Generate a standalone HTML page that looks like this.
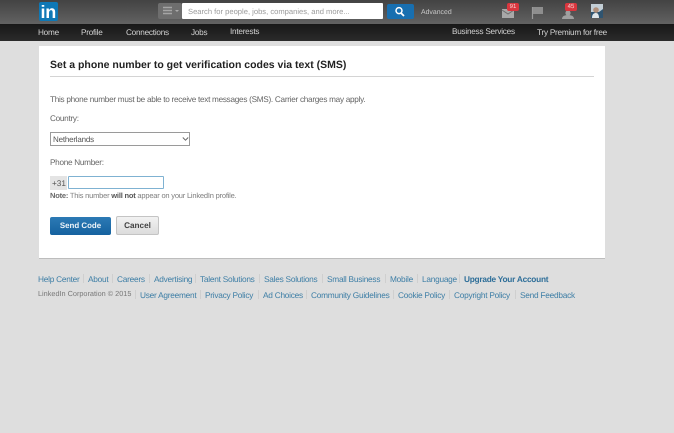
<!DOCTYPE html>
<html><head><meta charset="utf-8"><style>
html,body{margin:0;padding:0}
body{width:674px;height:433px;overflow:hidden;position:relative;background:#dedede;font-family:"Liberation Sans",sans-serif;text-rendering:geometricPrecision}
#w{position:absolute;left:0;top:0;width:674px;height:433px;filter:blur(.35px)}
.t{position:absolute;white-space:nowrap;line-height:12px}
.n{color:#d2d2d2;font-size:8.2px;letter-spacing:-.24px;top:27px}
.f{color:#3f7fa6;font-size:8.3px;letter-spacing:-.25px;top:272.5px}
.g{top:288.5px}
.c{font-size:8.2px;letter-spacing:-.28px;color:#666}
.s{position:absolute;width:1px;height:9px;background:#cfcfcf}
.b{position:absolute;background:#d9363e;border-radius:2px;color:#f3d5d5;font-size:6px;line-height:8px;text-align:center}
</style></head><body><div id="w">
<div style="position:absolute;left:0;top:0;width:674px;height:24px;background:linear-gradient(#434343,#626262)"></div>
<div style="position:absolute;left:0;top:24px;width:674px;height:17px;background:linear-gradient(#181818,#2b2b2b)"></div>
<div style="position:absolute;left:39px;top:2px;width:19px;height:19px;background:#0f78b5;border-radius:2px"></div>
<div class="t" style="left:40.5px;top:3px;font-size:18px;line-height:18px;font-weight:bold;color:#fff;letter-spacing:-.3px">in</div>
<div style="position:absolute;left:158px;top:3px;width:24px;height:16px;background:#6e6e6e;border-radius:2px"></div>
<svg style="position:absolute;left:162px;top:6px" width="18" height="10"><path d="M1 1.5h9M1 4.5h9M1 7.5h9" stroke="#a5a5a5" stroke-width="1.6"/><path d="M13 4l2 2 2-2z" fill="#aaa"/></svg>
<div style="position:absolute;left:182px;top:3px;width:201px;height:16px;background:#fff;border-radius:1px"></div>
<div class="t" style="left:188px;top:5.5px;font-size:7.6px;color:#9a9a9a">Search for people, jobs, companies, and more...</div>
<div style="position:absolute;left:387px;top:4px;width:27px;height:15px;background:#186fb0;border-radius:2px"></div>
<svg style="position:absolute;left:394px;top:6px" width="12" height="12"><circle cx="5" cy="4.6" r="3" fill="none" stroke="#fff" stroke-width="1.5"/><path d="M7 7l3 3" stroke="#fff" stroke-width="1.8"/></svg>
<div class="t" style="left:421px;top:6.5px;font-size:6.9px;color:#c9c9c9">Advanced</div>
<svg style="position:absolute;left:500px;top:4px" width="104" height="16">
<path d="M2 5h12v9H2z" fill="#a8a8a8"/><path d="M2 6l6 4 6-4" fill="none" stroke="#6f6f6f"/>
<path d="M32.5 3v12" stroke="#9a9a9a" stroke-width="1.2"/><path d="M33 3h10v7H33z" fill="#8e8e8e"/>
<circle cx="68" cy="9" r="2.6" fill="#a0a0a0"/><path d="M62 15c0-3 3-4 6-4s6 1 6 4z" fill="#a0a0a0"/>
</svg>
<div class="b" style="left:507px;top:3px;width:12px;height:8px">91</div>
<div class="b" style="left:565px;top:3px;width:12px;height:8px">45</div>
<svg style="position:absolute;left:591px;top:4px" width="12" height="14"><rect width="12" height="14" fill="#2f5470"/><path d="M0 0h12v5l-4 3H0z" fill="#c3ced5"/><circle cx="5" cy="6" r="2.8" fill="#b08f7a"/><path d="M1 14c0-4 2-5 4-5s3 2 3 5z" fill="#dfe5e9"/></svg>
<div class="t n" style="left:38px">Home</div>
<div class="t n" style="left:81px">Profile</div>
<div class="t n" style="left:126px">Connections</div>
<div class="t n" style="left:191px">Jobs</div>
<div class="t n" style="left:230px;top:26px">Interests</div>
<div class="t n" style="left:452px;top:26px">Business Services</div>
<div class="t n" style="left:537px">Try Premium for free</div>

<div style="position:absolute;left:39px;top:46px;width:566px;height:212px;background:#fff;border-bottom:1px solid #bdbdbd"></div>
<div class="t" style="left:50px;top:59px;font-size:10.5px;font-weight:bold;color:#222;line-height:13px">Set a phone number to get verification codes via text (SMS)</div>
<div style="position:absolute;left:50px;top:76px;width:544px;height:1px;background:#d4d4d4"></div>
<div class="t c" style="left:50px;top:94px">This phone number must be able to receive text messages (SMS). Carrier charges may apply.</div>
<div class="t c" style="left:50px;top:113px">Country:</div>
<div style="position:absolute;left:50px;top:132px;width:138px;height:12px;border:1px solid #9a9a9a;background:#fff"></div>
<div class="t" style="left:53px;top:134px;font-size:8px;letter-spacing:-.2px;color:#555">Netherlands</div>
<svg style="position:absolute;left:182px;top:136px" width="7" height="6"><path d="M.8 1.5l2.7 2.7 2.7-2.7" fill="none" stroke="#666"/></svg>
<div class="t c" style="left:50px;top:157px">Phone Number:</div>
<div style="position:absolute;left:50px;top:176px;width:17px;height:14px;background:#e4e4e4"></div>
<div class="t" style="left:52px;top:178px;font-size:8.2px;color:#555">+31</div>
<div style="position:absolute;left:68px;top:176px;width:94px;height:11px;border:1px solid #7fb2d2;border-radius:1px;background:#fff"></div>
<div class="t" style="left:50px;top:190px;font-size:7.5px;letter-spacing:-.2px;color:#7d7d7d"><b style="color:#666">Note:</b> This number <b style="color:#555">will not</b> appear on your LinkedIn profile.</div>
<div style="position:absolute;left:50px;top:217px;width:61px;height:18px;background:linear-gradient(#2c7ab5,#15629f);border-radius:2px;color:#eef4f9;font-size:7.9px;font-weight:bold;line-height:18px;text-align:center">Send Code</div>
<div style="position:absolute;left:116px;top:216px;width:41px;height:17px;border:1px solid #c4c4c4;background:linear-gradient(#f2f2f2,#dcdcdc);border-radius:2px;color:#444;font-size:8.2px;font-weight:bold;line-height:17px;text-align:center">Cancel</div>

<div class="t f" style="left:38px">Help Center</div>
<div class="t f" style="left:88px">About</div>
<div class="t f" style="left:117px">Careers</div>
<div class="t f" style="left:154px">Advertising</div>
<div class="t f" style="left:200px">Talent Solutions</div>
<div class="t f" style="left:264px">Sales Solutions</div>
<div class="t f" style="left:327px">Small Business</div>
<div class="t f" style="left:390px">Mobile</div>
<div class="t f" style="left:422px">Language</div>
<div class="t f" style="left:464px;font-weight:bold;color:#2f6f99">Upgrade Your Account</div>
<div class="t" style="left:38px;top:287.5px;font-size:7.3px;color:#777">LinkedIn Corporation © 2015</div>
<div class="t f g" style="left:140px">User Agreement</div>
<div class="t f g" style="left:205px">Privacy Policy</div>
<div class="t f g" style="left:263px">Ad Choices</div>
<div class="t f g" style="left:311px">Community Guidelines</div>
<div class="t f g" style="left:398px">Cookie Policy</div>
<div class="t f g" style="left:454px">Copyright Policy</div>
<div class="t f g" style="left:520px">Send Feedback</div>
<div class="s" style="left:83px;top:274px"></div><div class="s" style="left:112px;top:274px"></div><div class="s" style="left:149px;top:274px"></div><div class="s" style="left:195px;top:274px"></div><div class="s" style="left:259px;top:274px"></div><div class="s" style="left:322px;top:274px"></div><div class="s" style="left:385px;top:274px"></div><div class="s" style="left:417px;top:274px"></div><div class="s" style="left:459px;top:274px"></div>
<div class="s" style="left:135px;top:290px"></div><div class="s" style="left:200px;top:290px"></div><div class="s" style="left:258px;top:290px"></div><div class="s" style="left:306px;top:290px"></div><div class="s" style="left:393px;top:290px"></div><div class="s" style="left:449px;top:290px"></div><div class="s" style="left:515px;top:290px"></div>
</div></body></html>
